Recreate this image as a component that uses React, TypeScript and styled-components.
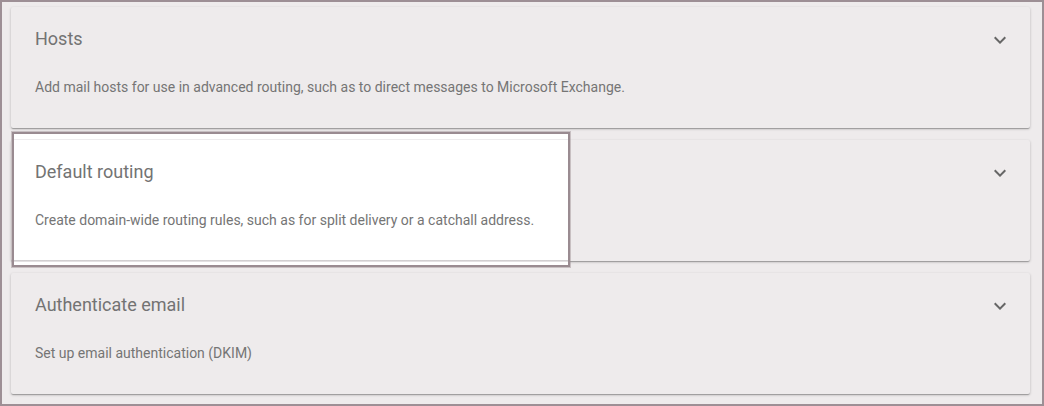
import * as React from "react";
import styled, { createGlobalStyle } from "styled-components";

const GlobalStyle = createGlobalStyle`
    html, body {
        margin: 0;
        padding: 0;
        background: #eeebec;
    }
    * {
        box-sizing: border-box;
    }
`;

const Frame = styled.div`
    width: 1044px;
    height: 406px;
    border: 2px solid #9d8f95;
    background: #eeebec;
    padding: 5px 12px 0 9px;
    display: flex;
    flex-direction: column;
    gap: 12px;
    font-family: Roboto, "Liberation Sans", sans-serif;
    overflow: hidden;
`;

const Card = styled.section`
    position: relative;
    height: 121px;
    background: #eeebec;
    border-radius: 2px;
    box-shadow: 0 1px 3px rgba(0, 0, 0, 0.2), 0 1px 1px rgba(0, 0, 0, 0.14), 0 2px 1px -1px rgba(0, 0, 0, 0.12);
    padding: 20px 24px 0;
`;

const Spotlight = styled.div`
    position: absolute;
    left: 1px;
    top: -8px;
    width: 558px;
    height: 135px;
    background: #ffffff;
    border: 2px solid #9a8b91;
    box-shadow: 0 0 0 1px rgba(154, 139, 145, 0.45);
    z-index: 0;

    &::before {
        content: "";
        position: absolute;
        left: 0;
        right: 0;
        top: 5px;
        height: 1px;
        background: #eeecee;
    }

    &::after {
        content: "";
        position: absolute;
        left: 0;
        right: 0;
        top: 126px;
        height: 2px;
        background: linear-gradient(#c9c6c8, #ebe9ea);
    }
`;

const Header = styled.div`
    position: relative;
    z-index: 1;
    display: flex;
    align-items: center;
    justify-content: space-between;
    height: 24px;
`;

const Title = styled.h2`
    margin: 0;
    font-size: 18px;
    font-weight: 400;
    line-height: 24px;
    color: #737373;
`;

const Toggle = styled.span`
    display: flex;
    width: 24px;
    height: 24px;
    margin: 1px -6px 0 0;
    color: #666666;
`;

const Description = styled.p`
    position: relative;
    z-index: 1;
    margin: 26px 0 0;
    font-size: 14px;
    line-height: 20px;
    color: #757575;
`;

const ExpandMore = () => (
    <svg width="24" height="24" viewBox="0 0 24 24" fill="currentColor">
        <path d="M16.59 8.59 12 13.17 7.41 8.59 6 10l6 6 6-6z" />
    </svg>
);

type Section = {
    title: string;
    description: string;
    highlighted?: boolean;
};

const sections: Section[] = [
    {
        title: "Hosts",
        description: "Add mail hosts for use in advanced routing, such as to direct messages to Microsoft Exchange.",
    },
    {
        title: "Default routing",
        description: "Create domain-wide routing rules, such as for split delivery or a catchall address.",
        highlighted: true,
    },
    {
        title: "Authenticate email",
        description: "Set up email authentication (DKIM)",
    },
];

export default function App() {
    return (
        <>
            <GlobalStyle />
            <Frame>
                {sections.map((section) => (
                    <Card key={section.title}>
                        {section.highlighted && <Spotlight />}
                        <Header>
                            <Title>{section.title}</Title>
                            <Toggle>
                                <ExpandMore />
                            </Toggle>
                        </Header>
                        <Description>{section.description}</Description>
                    </Card>
                ))}
            </Frame>
        </>
    );
}
